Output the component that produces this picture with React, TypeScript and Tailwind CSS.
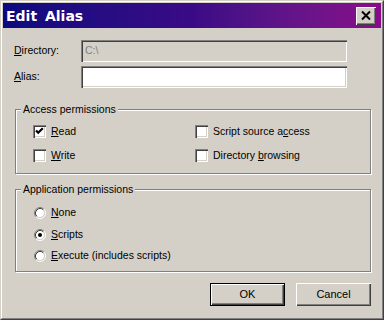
import React from "react";

const font = "font-['Liberation_Sans',Arial,sans-serif]";

// sunken 3D edge used by inputs and checkboxes
const sunken =
  "shadow-[inset_1px_1px_0_#808080,inset_2px_2px_0_#404040,inset_-1px_-1px_0_#ffffff,inset_-2px_-2px_0_#d4d0c8]";
const raised =
  "shadow-[inset_1px_1px_0_#ffffff,inset_-1px_-1px_0_#404040,inset_-2px_-2px_0_#808080]";

function Checkbox({ checked, children }: { checked?: boolean; children: React.ReactNode }) {
  return (
    <div className="flex items-center h-[13px]">
      <div className={`w-[13px] h-[13px] bg-white ${sunken} flex items-center justify-center`}>
        {checked && (
          <svg width="13" height="13" viewBox="0 0 13 13">
            <path d="M3 5.5 L5.2 7.8 L9.8 3.2" stroke="#000" strokeWidth="2.2" fill="none" />
          </svg>
        )}
      </div>
      <span className="ml-[5px] text-black">{children}</span>
    </div>
  );
}

function Radio({ checked, children }: { checked?: boolean; children: React.ReactNode }) {
  return (
    <div className="flex items-center h-[12px]">
      <svg width="12" height="12" viewBox="0 0 12 12" className="ml-[1px]">
        <circle cx="6" cy="6" r="4.2" fill="#fff" />
        <path d="M2.11 9.89 A5.5 5.5 0 0 1 9.89 2.11" stroke="#808080" fill="none" />
        <path d="M2.82 9.18 A4.5 4.5 0 0 1 9.18 2.82" stroke="#404040" fill="none" />
        <path d="M9.89 2.11 A5.5 5.5 0 0 1 2.11 9.89" stroke="#ffffff" fill="none" />
        <path d="M9.18 2.82 A4.5 4.5 0 0 1 2.82 9.18" stroke="#d4d0c8" fill="none" />
        {checked && <circle cx="6" cy="6" r="2" fill="#000" />}
      </svg>
      <span className="ml-[5px] text-black">{children}</span>
    </div>
  );
}

function GroupBox({ title, className, children }: { title: string; className: string; children: React.ReactNode }) {
  return (
    <div className={`relative ml-px w-[356px] border border-[#808080] shadow-[inset_1px_1px_0_#ffffff,1px_1px_0_#ffffff] ${className}`}>
      <span className="absolute -top-[7px] left-[5px] px-[2px] leading-[13px] bg-[#d4d0c8] text-black">{title}</span>
      {children}
    </div>
  );
}

export default function App() {
  return (
    <div className={`w-[384px] h-[320px] bg-[#d4d0c8] border border-t-[#d4d0c8] border-l-[#d4d0c8] border-r-[#404040] border-b-[#404040] text-[10.5px] ${font}`}>
      <div className="h-full border border-t-white border-l-white border-r-[#808080] border-b-[#808080] p-px flex flex-col">
        {/* Title bar */}
        <div className="h-[25px] flex items-center justify-between bg-linear-to-r from-[#0a0a7e] via-[#3a0a86] to-[#8a0a8a] pl-[3px] pr-[5px]">
          <span className="text-white text-[14px] font-bold font-['DejaVu_Sans',Verdana,sans-serif] [word-spacing:3px] leading-none">
            Edit Alias
          </span>
          <div className={`w-[20px] h-[18px] bg-[#d4d0c8] ${raised} flex items-center justify-center`}>
            <svg width="12" height="11" viewBox="0 0 12 11">
              <path d="M2 1.5 L10 9.5 M10 1.5 L2 9.5" stroke="#000" strokeWidth="2" />
            </svg>
          </div>
        </div>

        <div className="px-[11px] pt-[12px] flex flex-col">
          <div className="flex items-center">
            <span className="w-[67px] text-black"><u>D</u>irectory:</span>
            <div className={`w-[266px] h-[22px] ${sunken} flex items-center pl-[4px] text-[#808080]`}>C:\</div>
          </div>
          <div className="flex items-center mt-[4px]">
            <span className="w-[67px] text-black"><u>A</u>lias:</span>
            <div className={`w-[266px] h-[22px] bg-white ${sunken}`} />
          </div>

          <GroupBox title="Access permissions" className="mt-[21px] h-[65px]">
            <div className="grid grid-cols-[162px_1fr] gap-y-[11px] pt-[15px] pl-[17px]">
              <Checkbox checked><u>R</u>ead</Checkbox>
              <Checkbox>Script source a<u>c</u>cess</Checkbox>
              <Checkbox><u>W</u>rite</Checkbox>
              <Checkbox>Directory <u>b</u>rowsing</Checkbox>
            </div>
          </GroupBox>

          <GroupBox title="Application permissions" className="mt-[15px] h-[83px]">
            <div className="flex flex-col gap-[9.5px] pt-[17px] pl-[17px]">
              <Radio><u>N</u>one</Radio>
              <Radio checked><u>S</u>cripts</Radio>
              <Radio><u>E</u>xecute (includes scripts)</Radio>
            </div>
          </GroupBox>

          <div className="ml-px w-[356px] mt-[11px] flex justify-end gap-[11px]">
            <button className={`w-[75px] h-[23px] border border-black bg-[#d4d0c8] ${raised} text-black text-[11px]`}>OK</button>
            <button className={`w-[75px] h-[23px] bg-[#d4d0c8] ${raised} text-black text-[11px]`}>Cancel</button>
          </div>
        </div>
      </div>
    </div>
  );
}
